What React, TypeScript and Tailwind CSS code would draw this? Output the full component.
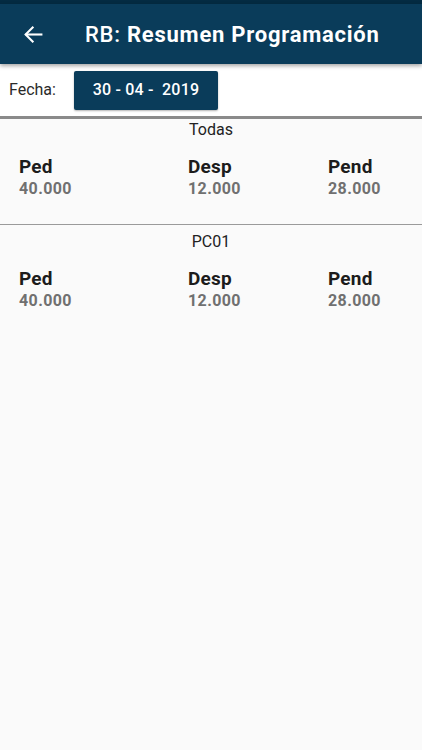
import React from 'react';

interface Resumen {
  nombre: string;
  ped: string;
  desp: string;
  pend: string;
}

const resumenes: Resumen[] = [
  { nombre: 'Todas', ped: '40.000', desp: '12.000', pend: '28.000' },
  { nombre: 'PC01', ped: '40.000', desp: '12.000', pend: '28.000' },
];

function Stat({ label, value }: { label: string; value: string }) {
  return (
    <div className="flex flex-col">
      <span className="text-[19px] leading-[24px] font-bold text-[#1c1c1c] tracking-[0.2px]">{label}</span>
      <span className="text-[16px] leading-[20px] font-bold text-[#707070] tracking-[0.4px]">{value}</span>
    </div>
  );
}

export default function App() {
  return (
    <div className="w-[422px] h-[750px] bg-[#fafafa] flex flex-col overflow-hidden" style={{ fontFamily: 'Roboto, "Noto Sans", sans-serif' }}>
      <div className="h-[4px] bg-[#042b42]" />
      <header className="h-[60px] bg-[#0a3c5a] flex items-center shadow-[0_2px_4px_rgba(0,0,0,0.35)] relative z-10">
        <div className="w-[85px] flex items-center pl-[23px]">
          <svg width="21" height="21" viewBox="0 0 24 24" fill="none" stroke="white" strokeWidth="2.4" strokeLinecap="square">
            <path d="M21 12H4" />
            <path d="M11 4l-8 8 8 8" />
          </svg>
        </div>
        <h1 className="text-white text-[22px] tracking-[0.75px]">
          <span className="font-medium">RB: </span>
          <span className="font-bold">Resumen Programación</span>
        </h1>
      </header>

      <div className="h-[52px] bg-white flex items-center">
        <span className="pl-[9px] w-[74px] text-[16px] text-[#2a2a2a]">Fecha:</span>
        <button className="w-[144px] h-[39px] rounded-[2px] bg-[#0a3c5a] text-white text-[16px] font-medium tracking-[0.2px] shadow-[0_1px_2px_rgba(0,0,0,0.3)] whitespace-pre">
          30 - 04 -  2019
        </button>
      </div>
      <div className="h-[3px] bg-[#8a8a8a]" />

      {resumenes.map((r, idx) => (
        <section key={r.nombre} className={idx > 0 ? 'border-t border-[#9a9a9a] pt-[7px]' : 'pt-[1px]'}>
          <div className="text-center text-[16px] leading-[20px] text-[#222]">{r.nombre}</div>
          <div className="grid grid-cols-[169px_140px_1fr] pl-[19px] pt-[15px] pb-[25px]">
            <Stat label="Ped" value={r.ped} />
            <Stat label="Desp" value={r.desp} />
            <Stat label="Pend" value={r.pend} />
          </div>
        </section>
      ))}
    </div>
  );
}
